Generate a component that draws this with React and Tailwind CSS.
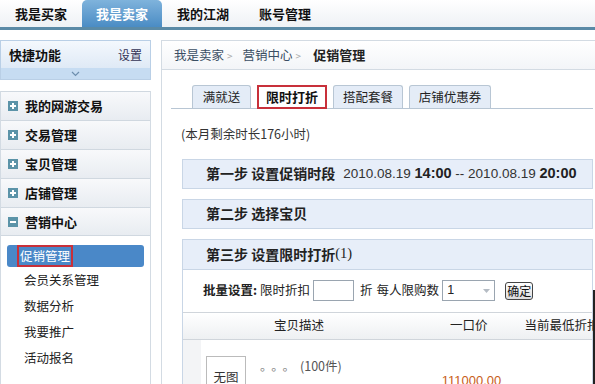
import React from 'react';

const FONT = { fontFamily: '"Noto Sans CJK SC", "Noto Sans", sans-serif' };
const NUM = { fontFamily: '"Liberation Sans", Arial, sans-serif' };

const navTabs = ['我是买家', '我是卖家', '我的江湖', '账号管理'];
const menuGroups = ['我的网游交易', '交易管理', '宝贝管理', '店铺管理'];
const subItems = ['会员关系管理', '数据分析', '我要推广', '活动报名'];
const promoTabs = ['满就送', '限时打折', '搭配套餐', '店铺优惠券'];

const PlusBox = ({ open }) => (
  <span className="w-[10px] h-[10px] bg-[#5b93a8] flex items-center justify-center shrink-0">
    <span className="relative w-[6px] h-[6px] flex items-center justify-center">
      <span className="absolute w-[6px] h-[2px] bg-white" />
      {!open && <span className="absolute w-[2px] h-[6px] bg-white" />}
    </span>
  </span>
);

const StepBar = ({ children }) => (
  <div className="h-[30px] border border-[#c9d6e6] bg-[#e7eef9] flex items-center pl-[23px] text-[14px] text-[#222] whitespace-nowrap">
    {children}
  </div>
);

export default function App() {
  return (
    <div className="relative w-[595px] h-[384px] overflow-hidden bg-white text-[12px] text-[#333]" style={FONT}>
      {/* top nav */}
      <div className="h-[27px] bg-gradient-to-b from-white to-[#eef1f5] flex items-end whitespace-nowrap">
        {navTabs.map((t, i) => (
          <div
            key={t}
            className={
              i === 1
                ? 'h-[27px] w-[80px] rounded-t-[5px] bg-gradient-to-b from-[#7fb3dc] to-[#4a8cc4] text-white font-bold text-[13px] flex items-center justify-center'
                : 'h-[27px] px-[15px] font-bold text-[13px] text-[#111] flex items-center'
            }
          >
            {t}
          </div>
        ))}
      </div>
      <div className="h-[3px] bg-[#5a8aa6]" />

      <div className="flex pt-[10px]">
        {/* left column */}
        <div className="w-[151px] shrink-0 whitespace-nowrap">
          <div className="border border-[#b9cfe6]">
            <div className="h-[27px] bg-gradient-to-b from-[#f4f8fd] to-[#dfeaf6] flex items-center justify-between px-[8px]">
              <span className="font-bold text-[13px] text-[#111]">快捷功能</span>
              <span className="text-[12px] text-[#335]">设置</span>
            </div>
            <div className="h-[11px] bg-[#c6dcf2] flex items-center justify-center">
              <svg width="9" height="6" viewBox="0 0 9 6">
                <path d="M1 1 L4.5 4.5 L8 1" stroke="#6d8eae" strokeWidth="1.2" fill="none" />
              </svg>
            </div>
          </div>

          <div className="mt-[11px] border-l border-r border-[#d3dbe3] h-[300px]">
            {menuGroups.map((g) => (
              <div
                key={g}
                className="h-[29px] border-t border-[#d0d8e0] bg-gradient-to-b from-[#f8f9fb] to-[#e8ecf1] flex items-center gap-[7px] pl-[7px] font-bold text-[13px] text-[#111]"
              >
                <PlusBox />
                {g}
              </div>
            ))}
            <div className="h-[29px] border-t border-b border-[#d0d8e0] bg-gradient-to-b from-[#f8f9fb] to-[#e8ecf1] flex items-center gap-[7px] pl-[7px] font-bold text-[13px] text-[#111]">
              <PlusBox open />
              营销中心
            </div>
            <div className="pt-[9px] px-[6px]">
              <div className="h-[22px] rounded-[3px] bg-[#4a88c8] flex items-center pl-[10px]">
                <span className="border-2 border-[#c8303a] text-white text-[12.5px] leading-[18px] px-[1px]">促销管理</span>
              </div>
              {subItems.map((s) => (
                <div key={s} className="h-[26px] flex items-center pl-[17px] text-[12.5px] text-[#222] first:mt-[2px]">
                  {s}
                </div>
              ))}
            </div>
          </div>
        </div>

        {/* main */}
        <div className="ml-[10px] flex-1 min-w-0 border-l border-t border-[#d3dbe3] whitespace-nowrap">
          <div className="h-[29px] border-b border-[#d3dbe3] bg-gradient-to-b from-white to-[#f3f5f8] flex items-center pl-[12px] text-[12.5px] text-[#3a4e63]">
            <span>我是卖家</span>
            <span className="text-[#aaa] text-[10px] ml-[3px] mr-[10px]">&gt;</span>
            <span>营销中心</span>
            <span className="text-[#aaa] text-[10px] ml-[3px] mr-[12px]">&gt;</span>
            <span className="font-bold text-[13px] text-[#222]">促销管理</span>
          </div>

          <div className="pl-[9px] pr-[2px]">
            <div className="flex items-end gap-[6px] mt-[15px] pl-[21px] border-b border-[#b8c6d4] h-[24px]">
              {promoTabs.map((t, i) => (
                <div
                  key={t}
                  className={
                    i === 1
                      ? 'h-[24px] w-[70px] shrink-0 border-2 border-[#c8303a] bg-white font-bold text-[13px] text-[#111] flex items-center justify-center -mb-[1px]'
                      : 'h-[23px] shrink-0 border border-b-0 border-[#b8c6d4] rounded-t-[3px] bg-[#e4ecf7] text-[12.5px] text-[#222] flex items-center justify-center ' +
                        (i === 0 ? 'w-[59px]' : i === 2 ? 'w-[70px]' : 'w-[82px]')
                  }
                >
                  {t}
                </div>
              ))}
            </div>

            <div className="mt-[16px] pl-[10px] text-[12.5px] text-[#333]">(本月剩余时长176小时)</div>

            <div className="pl-[11px] mt-[15px] flex flex-col gap-[10px]">
              <StepBar>
                <span className="font-bold">第一步 设置促销时段</span>
                <span className="ml-[8px] text-[13.5px] text-[#333]" style={NUM}>
                  2010.08.19 <b className="text-[#222] text-[14.5px]">14:00</b> -- 2010.08.19 <b className="text-[#222] text-[14.5px]">20:00</b>
                </span>
              </StepBar>
              <StepBar>
                <span className="font-bold">第二步 选择宝贝</span>
              </StepBar>
              <div className="border border-[#c9d6e6]">
                <div className="h-[30px] border-b border-[#c9d6e6] bg-[#e7eef9] flex items-center pl-[23px] text-[14px] text-[#222]">
                  <span className="font-bold">第三步 设置限时打折</span>
                  <span style={{ fontFamily: '"Liberation Serif", serif' }} className="text-[14.5px]">(1)</span>
                </div>
                <div className="h-[42px] flex items-center pl-[20px] text-[12.5px] text-[#222]">
                  <span className="font-bold">批量设置:</span>
                  <span className="ml-[3px]">限时折扣</span>
                  <span className="ml-[3px] w-[41px] h-[21px] border border-[#9aa5b0] bg-white shrink-0" />
                  <span className="ml-[6px]">折</span>
                  <span className="ml-[4px]">每人限购数</span>
                  <span className="ml-[3px] w-[53px] h-[21px] border border-[#9aa5b0] bg-white flex items-center justify-between px-[4px] shrink-0">
                    <span className="text-[12.5px]" style={NUM}>1</span>
                    <svg width="7" height="4" viewBox="0 0 7 4">
                      <path d="M0 0 L7 0 L3.5 4 Z" fill="#b5bcc4" />
                    </svg>
                  </span>
                  <span className="ml-[10px] h-[18px] px-[1px] border border-[#444] rounded-[3px] bg-gradient-to-b from-white to-[#dcdcdc] flex items-center text-[12px] text-[#111]">
                    确定
                  </span>
                </div>
                <div className="h-[28px] border-t border-b border-[#d0d5db] bg-gradient-to-b from-white to-[#eef0f2] flex items-center text-[12.5px] text-[#222]">
                  <span className="ml-[91px] shrink-0">宝贝描述</span>
                  <span className="ml-[126px] shrink-0">一口价</span>
                  <span className="ml-[37px] shrink-0">当前最低折扣</span>
                </div>
                <div className="flex h-[60px]">
                  <div className="w-[18px] bg-[#f3f4f6] shrink-0" />
                  <div className="flex-1 flex pt-[16px] pl-[5px]">
                    <div className="w-[40px] h-[40px] shrink-0 border border-[#bbb] flex items-end justify-center pb-[8px] text-[12.5px] text-[#333]">
                      无图
                    </div>
                    <div className="ml-[14px] mt-[1px] text-[12.5px] text-[#555] h-[20px] flex items-center">
                      <span className="tracking-[5px] text-[#888]">。。。</span>(100件)
                    </div>
                    <div className="ml-[100px] mt-[15px] text-[13px] text-[#c8601a]" style={NUM}>111000.00</div>
                  </div>
                </div>
              </div>
            </div>
          </div>
        </div>
      </div>
      <div className="absolute right-0 top-[290px] bottom-0 w-[2px] bg-[#222]" />
    </div>
  );
}
